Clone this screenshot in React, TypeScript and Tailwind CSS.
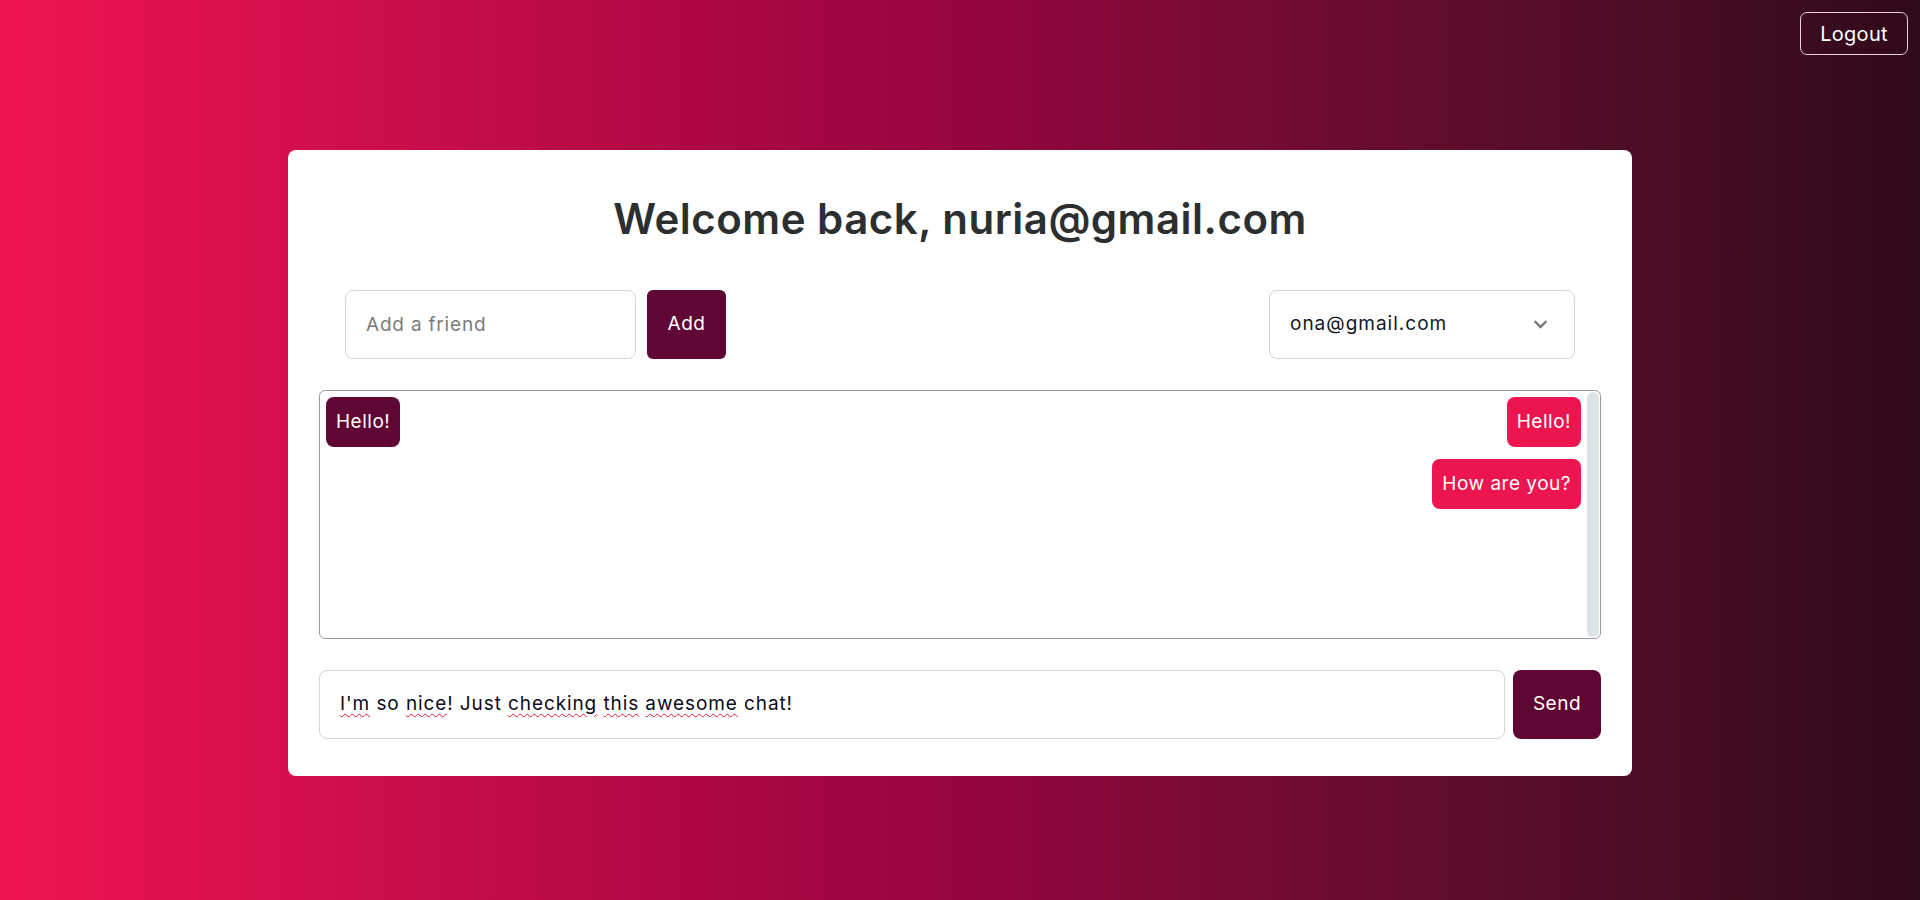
import { FaChevronDown } from "react-icons/fa";

const received = [{ id: 1, text: "Hello!" }];
const sent = [
  { id: 2, text: "Hello!" },
  { id: 3, text: "How are you?" },
];

function Typo({ children }: { children: string }) {
  return <span className="underline decoration-wavy decoration-[#e11d2a] decoration-1 underline-offset-[3px]">{children}</span>;
}

export default function App() {
  return (
    <div className="min-h-[900px] w-full bg-gradient-to-r from-[#ef1551] via-[#96043f] to-[#300a1a] font-['Inter',sans-serif]">
      <div className="flex justify-end px-3 pt-3">
        <button className="h-[43px] w-[108px] rounded-[7px] border border-[#e8d0da] text-[20px] tracking-[0.3px] text-white">
          Logout
        </button>
      </div>

      <div className="mx-auto mt-[95px] w-[1344px] rounded-lg bg-white px-[31px] pt-[40px] pb-[37px]">
        <h1 className="text-center text-[42px] font-semibold leading-[58px] tracking-[0.5px] text-[#2c2f30]">
          Welcome back, nuria@gmail.com
        </h1>

        <div className="mt-[42px] flex items-center justify-between px-[26px]">
          <div className="flex items-center gap-[11px]">
            <input
              placeholder="Add a friend"
              className="h-[69px] w-[291px] rounded-lg border border-[#d4d4d4] px-5 text-[19px] tracking-[0.8px] text-[#111] placeholder:text-[#7b7b7b] outline-none"
            />
            <button className="h-[69px] w-[79px] rounded-md bg-[#600634] text-[19px] tracking-[0.5px] text-white">Add</button>
          </div>
          <div className="flex h-[69px] w-[306px] items-center justify-between rounded-lg border border-[#d4d4d4] pl-5 pr-[26px]">
            <span className="text-[19px] tracking-[1px] text-[#111827]">ona@gmail.com</span>
            <FaChevronDown className="h-[15px] w-[15px] text-[#7a7a7a]" />
          </div>
        </div>

        <div className="mt-[31px] flex h-[249px] rounded-md border border-[#9a9a9a] p-[6px] pr-0">
          <div className="flex flex-1 justify-between">
            <div className="flex flex-col items-start gap-3">
              {received.map((m) => (
                <span key={m.id} className="flex h-[50px] items-center rounded-lg bg-[#600634] px-[10px] text-[19px] tracking-[0.5px] text-white">
                  {m.text}
                </span>
              ))}
            </div>
            <div className="flex flex-col items-end gap-3 pr-[6px]">
              {sent.map((m) => (
                <span key={m.id} className="flex h-[50px] items-center rounded-lg bg-[#ec1550] px-[10px] text-[19px] tracking-[0.5px] text-white">
                  {m.text}
                </span>
              ))}
            </div>
          </div>
          <div className="-my-[5px] mr-px w-[12px] rounded-md bg-[#dce4e8]" />
        </div>

        <div className="mt-[31px] flex gap-2">
          <div className="flex h-[69px] flex-1 items-center rounded-lg border border-[#d4d4d4] px-5 text-[19px] tracking-[0.9px] text-[#0b0b1a]">
            <span className="whitespace-pre">
              <Typo>I'm</Typo> so <Typo>nice</Typo>! Just <Typo>checking</Typo> <Typo>this</Typo> <Typo>awesome</Typo> chat!
            </span>
          </div>
          <button className="h-[69px] w-[88px] rounded-lg bg-[#600634] text-[19px] tracking-[0.5px] text-white">Send</button>
        </div>
      </div>
    </div>
  );
}
